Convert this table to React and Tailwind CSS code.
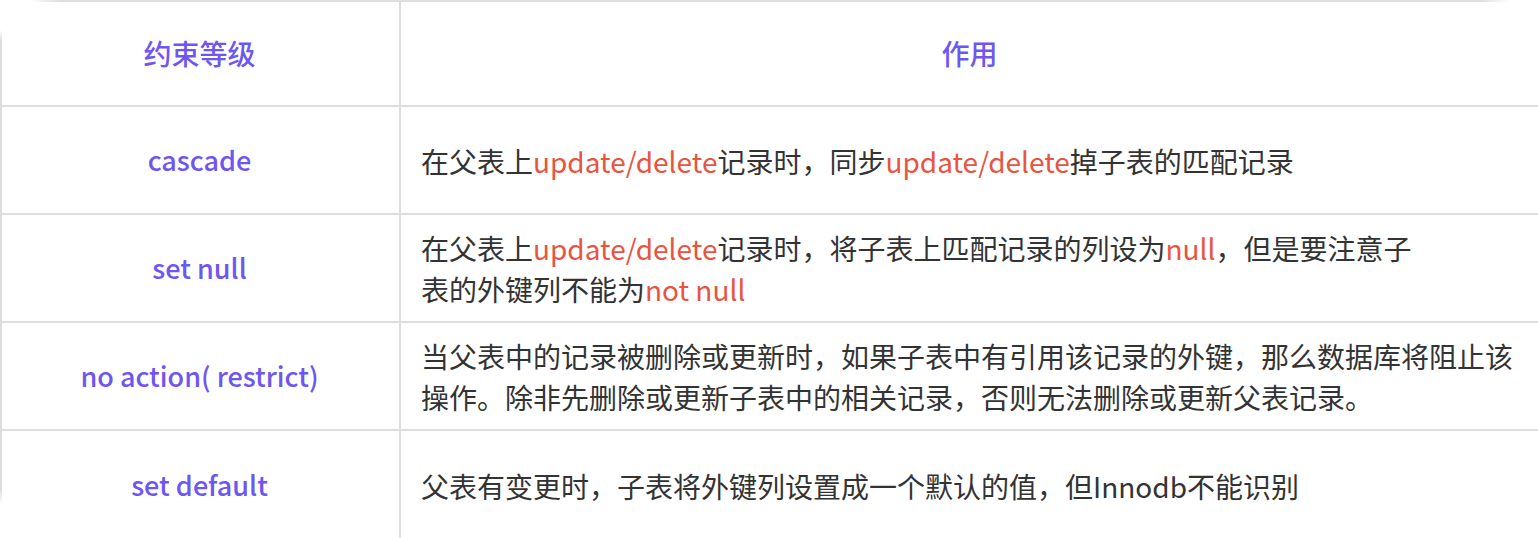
import React from "react";

const font = { fontFamily: '"Noto Sans CJK SC", "Noto Sans", sans-serif' };

function R({ children }) {
  return <span className="text-[#e8543f]">{children}</span>;
}

const rows = [
  {
    k: "cascade",
    v: (
      <>
        在父表上<R>update/delete</R>记录时，同步<R>update/delete</R>掉子表的匹配记录
      </>
    ),
  },
  {
    k: "set null",
    v: (
      <>
        在父表上<R>update/delete</R>记录时，将子表上匹配记录的列设为<R>null</R>，但是要注意子
        <br />
        表的外键列不能为<R>not null</R>
      </>
    ),
  },
  {
    k: "no action( restrict)",
    v: (
      <>
        当父表中的记录被删除或更新时，如果子表中有引用该记录的外键，那么数据库将阻止该
        <br />
        操作。除非先删除或更新子表中的相关记录，否则无法删除或更新父表记录。
      </>
    ),
  },
  {
    k: "set default",
    v: <>父表有变更时，子表将外键列设置成一个默认的值，但Innodb不能识别</>,
  },
];

export default function App() {
  return (
    <div className="w-[1538px] h-[538px] bg-white overflow-hidden relative" style={font}>
      <div className="absolute left-0 top-0 w-full h-[2px] bg-[linear-gradient(to_right,transparent_30px,#dedede_60px,#dedede_1480px,transparent_1510px)]" />
      <div className="absolute left-0 top-0 w-[2px] h-full bg-[linear-gradient(to_bottom,transparent_30px,#dedede_40px,#dedede_490px,transparent_505px)]" />
      <div className="flex flex-col pt-[1px]">
        <div className="flex h-[106px] border-b-2 border-[#dedede]">
          <div className="w-[401px] shrink-0 border-r-2 border-[#dedede] flex items-center justify-center text-[28px] font-medium text-[#6e56f2]">
            约束等级
          </div>
          <div className="flex-1 flex items-center justify-center text-[28px] font-medium text-[#6e56f2]">
            作用
          </div>
        </div>
        {rows.map((r, i) => (
          <div
            key={i}
            className={
              "flex h-[108px] " + (i < rows.length - 1 ? "border-b-2 border-[#dedede]" : "")
            }
          >
            <div className="w-[401px] shrink-0 border-r-2 border-[#dedede] flex items-center justify-center text-[27px] font-medium text-[#6e56f2]">
              {r.k}
            </div>
            <div className="flex-1 flex items-center pl-[20px] pt-[2px] text-[28px] leading-[41px] text-[#333333]">
              <div>{r.v}</div>
            </div>
          </div>
        ))}
      </div>
    </div>
  );
}
